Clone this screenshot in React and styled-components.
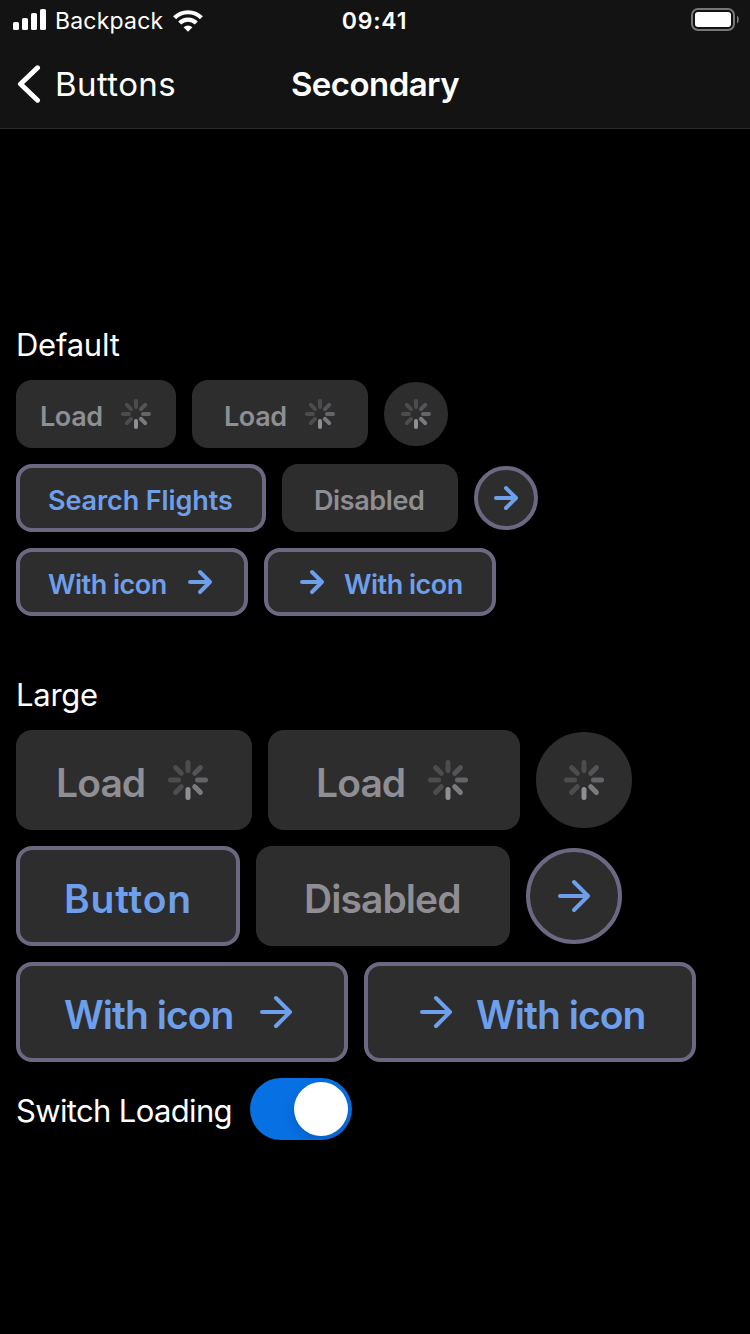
import React from "react";
import styled, { createGlobalStyle, css } from "styled-components";

const GlobalStyle = createGlobalStyle`
  * { box-sizing: border-box; }
  body {
    margin: 0;
    background: #000;
    color: #fff;
    font-family: Inter, "Liberation Sans", sans-serif;
  }
`;

const Screen = styled.div`
  width: 750px;
  height: 1334px;
  overflow: hidden;
  display: flex;
  flex-direction: column;
  background: #000;
`;

const Header = styled.header`
  height: 129px;
  background: #131313;
  border-bottom: 1px solid #2a2a2b;
`;

const Bar = styled.div`
  display: grid;
  grid-template-columns: 1fr auto 1fr;
  align-items: center;
`;

const StatusBar = styled(Bar)`
  height: 39px;
  padding: 0 11px 0 13px;
`;

const NavBar = styled(Bar)`
  height: 89px;
  padding: 1px 17px 0;
`;

const Side = styled.div`
  display: flex;
  align-items: center;
  justify-content: ${(p) => (p.$end ? "flex-end" : "flex-start")};
  gap: ${(p) => p.$gap || 0}px;
`;

const Text = styled.span`
  display: block;
  flex: none;
  white-space: nowrap;
  line-height: 1.2;
  width: ${(p) => (p.$width ? `${p.$width}px` : "auto")};
  font-size: ${(p) => p.$size}px;
  font-weight: ${(p) => p.$weight || 400};
  letter-spacing: ${(p) => p.$track || 0}px;
`;

const StatusText = styled(Text)`
  padding-top: 5px;
`;

const Clock = styled(StatusText)`
  padding-right: 3px;
`;

const NavText = styled(Text)`
  padding-top: 0.6px;
`;

const Content = styled.main`
  padding: 197px 16px 0;
  display: flex;
  flex-direction: column;
`;

const Section = styled.section`
  display: flex;
  flex-direction: column;
  gap: 16px;
  margin-bottom: ${(p) => p.$after}px;
`;

const SectionTitle = styled(Text).attrs({ as: "h2" })`
  margin: 0;
  height: 38px;
  line-height: 38px;
`;

const Row = styled.div`
  display: flex;
  align-items: center;
  gap: 16px;
`;

const inactive = css`
  color: #8e8e93;
  border-color: #2d2d2e;
`;

const ButtonBase = styled.button`
  display: flex;
  align-items: center;
  justify-content: center;
  flex: none;
  margin: 0;
  padding: 0;
  gap: 16px;
  font-family: inherit;
  background: #2d2d2e;
  color: #6d9feb;
  border: 4px solid #6b6982;
  ${(p) => p.disabled && inactive}
`;

const RectButton = styled(ButtonBase)`
  width: ${(p) => p.$w}px;
  height: ${(p) => (p.$large ? 100 : 68)}px;
  border-radius: 16px;
`;

const RoundButton = styled(ButtonBase)`
  width: ${(p) => (p.$large ? 96 : 64)}px;
  height: ${(p) => (p.$large ? 96 : 64)}px;
  border-radius: 50%;
`;

const ButtonText = styled(Text)`
  text-align: left;
  padding-top: ${(p) => (p.$size > 30 ? 7 : 5.4)}px;
`;

const Glyph = styled.svg`
  display: block;
  flex: none;
`;

const SwitchRow = styled.div`
  display: flex;
  align-items: center;
  justify-content: space-between;
  width: 336px;
  height: 62px;
`;

const SwitchText = styled(Text)`
  padding-top: 3.4px;
`;

const SwitchTrack = styled.div`
  width: 102px;
  height: 62px;
  padding: 4px;
  display: flex;
  justify-content: flex-end;
  border-radius: 31px;
  background: #0770e3;
`;

const SwitchKnob = styled.div`
  width: 54px;
  height: 54px;
  border-radius: 50%;
  background: #fff;
  box-shadow: 0 4px 12px rgba(0, 0, 0, 0.16);
`;

const SPOKES = [0.32, 0.4, 0.58, 0.8, 1, 0.32, 0.32, 0.32];

function Spinner({ large }) {
  const box = large ? 48 : 32;
  const width = large ? 5 : 4;
  const outer = (large ? 20 : 15) - width / 2;
  const inner = (large ? 7 : 5) + width / 2;
  return (
    <Glyph width={box} height={box} viewBox={`${-box / 2} ${-box / 2} ${box} ${box}`}>
      {SPOKES.map((opacity, i) => (
        <line
          key={i}
          y1={-inner}
          y2={-outer}
          stroke="#8e8e93"
          strokeOpacity={opacity}
          strokeWidth={width}
          strokeLinecap="round"
          transform={`rotate(${i * 45})`}
        />
      ))}
    </Glyph>
  );
}

function Arrow({ large }) {
  const box = large ? 48 : 32;
  const r = large ? 14 : 10;
  return (
    <Glyph
      width={box}
      height={box}
      viewBox={`${-box / 2} ${-box / 2} ${box} ${box}`}
      fill="none"
      stroke="currentColor"
      strokeWidth="4"
      strokeLinecap="round"
      strokeLinejoin="round"
    >
      <path d={`M${-r} 0H${r}M0 ${-r}L${r} 0L0 ${r}`} />
    </Glyph>
  );
}

function Button({ w, large, disabled, before, after, label, textWidth, track }) {
  return (
    <RectButton $w={w} $large={large} disabled={disabled}>
      {before}
      <ButtonText $size={large ? 39 : 27} $weight={600} $width={textWidth} $track={track}>
        {label}
      </ButtonText>
      {after}
    </RectButton>
  );
}

function SignalIcon() {
  return (
    <Glyph width="33" height="21" viewBox="0 0 33 21" fill="#fff">
      <rect x="0" y="13" width="6" height="8" rx="1.6" />
      <rect x="9" y="9" width="6" height="12" rx="1.6" />
      <rect x="18" y="4" width="6" height="17" rx="1.6" />
      <rect x="27" y="0" width="6" height="21" rx="1.6" />
    </Glyph>
  );
}

function WifiIcon() {
  return (
    <Glyph width="30" height="24" viewBox="0 -2 30 24" fill="none" stroke="#fff" strokeWidth="4.2">
      <path d="M1.6 7.8A19 19 0 0 1 28.4 7.8" />
      <path d="M6.7 13A11.8 11.8 0 0 1 23.3 13" />
      <path d="M15 21.8L10.6 17.3A6.3 6.3 0 0 1 19.4 17.3Z" fill="#fff" stroke="none" />
    </Glyph>
  );
}

function BatteryIcon() {
  return (
    <Glyph width="48" height="23" viewBox="0 0 48 23">
      <rect x="1" y="1" width="42" height="21" rx="6" fill="none" stroke="#777" strokeWidth="2" />
      <rect x="4" y="4" width="36" height="15" rx="3" fill="#fff" />
      <path d="M46 7.5C48.4 8.8 48.4 14.2 46 15.5Z" fill="#777" />
    </Glyph>
  );
}

function BackIcon() {
  return (
    <Glyph width="24" height="38" viewBox="0 0 24 38" fill="none" stroke="#fff" strokeWidth="5" strokeLinecap="round" strokeLinejoin="round">
      <path d="M20.5 2.8L3.5 19L20.5 35.2" />
    </Glyph>
  );
}

export default function App() {
  return (
    <Screen>
      <GlobalStyle />
      <Header>
        <StatusBar>
          <Side $gap={9}>
            <SignalIcon />
            <StatusText $size={23} $width={109} $track={0.2}>Backpack</StatusText>
            <WifiIcon />
          </Side>
          <Clock $size={23} $weight={600} $track={0.8}>09:41</Clock>
          <Side $end>
            <BatteryIcon />
          </Side>
        </StatusBar>
        <NavBar>
          <Side $gap={14}>
            <BackIcon />
            <NavText $size={33} $track={0.4}>Buttons</NavText>
          </Side>
          <NavText $size={33} $weight={600} $track={-0.55}>Secondary</NavText>
          <Side $end />
        </NavBar>
      </Header>
      <Content>
        <Section $after={60}>
          <SectionTitle $size={31} $track={-0.25}>Default</SectionTitle>
          <Row>
            <Button w={160} disabled label="Load" textWidth={64} track={-0.4} after={<Spinner />} />
            <Button w={176} disabled label="Load" textWidth={64} track={-0.4} after={<Spinner />} />
            <RoundButton disabled><Spinner /></RoundButton>
          </Row>
          <Row>
            <Button w={250} label="Search Flights" textWidth={186} track={-0.1} />
            <Button w={176} disabled label="Disabled" textWidth={112} track={-0.4} />
            <RoundButton><Arrow /></RoundButton>
          </Row>
          <Row>
            <Button w={232} label="With icon" textWidth={120} track={-0.5} after={<Arrow />} />
            <Button w={232} label="With icon" textWidth={120} track={-0.5} before={<Arrow />} />
          </Row>
        </Section>
        <Section $after={16}>
          <SectionTitle $size={31} $track={-0.25}>Large</SectionTitle>
          <Row>
            <Button large w={236} disabled label="Load" textWidth={92} track={-0.9} after={<Spinner large />} />
            <Button large w={252} disabled label="Load" textWidth={92} track={-0.9} after={<Spinner large />} />
            <RoundButton $large disabled><Spinner large /></RoundButton>
          </Row>
          <Row>
            <Button large w={224} label="Button" textWidth={128} track={0.8} />
            <Button large w={254} disabled label="Disabled" textWidth={158} track={-0.95} />
            <RoundButton $large><Arrow large /></RoundButton>
          </Row>
          <Row>
            <Button large w={332} label="With icon" textWidth={172} track={-0.95} after={<Arrow large />} />
            <Button large w={332} label="With icon" textWidth={172} track={-0.95} before={<Arrow large />} />
          </Row>
        </Section>
        <SwitchRow>
          <SwitchText $size={31} $track={-0.65}>Switch Loading</SwitchText>
          <SwitchTrack role="switch" aria-checked="true">
            <SwitchKnob />
          </SwitchTrack>
        </SwitchRow>
      </Content>
    </Screen>
  );
}
